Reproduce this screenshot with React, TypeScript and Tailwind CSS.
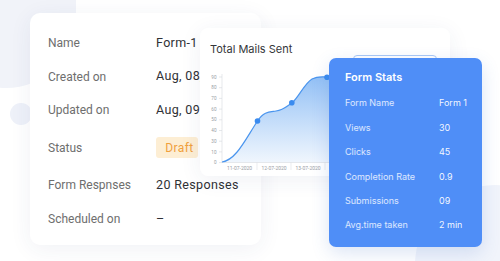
import React from 'react';

const details = [
  { label: 'Name', value: 'Form-1', h: 'h-[34px]' },
  { label: 'Created on', value: 'Aug, 08, 2020', h: 'h-[33px]' },
  { label: 'Updated on', value: 'Aug, 09, 2020', h: 'h-[34px]' },
  { label: 'Status', value: 'Draft', h: 'h-[41px]' },
  { label: 'Form Respnses', value: '20 Responses', h: 'h-[34px]' },
  { label: 'Scheduled on', value: '–', h: 'h-[34px]' },
];

const stats = [
  { label: 'Form Name', value: 'Form 1' },
  { label: 'Views', value: '30' },
  { label: 'Clicks', value: '45' },
  { label: 'Completion Rate', value: '0.9' },
  { label: 'Submissions', value: '09' },
  { label: 'Avg.time taken', value: '2 min' },
];

const yTicks = [90, 80, 70, 60, 50, 40, 30, 10, 0];

const MailsChart: React.FC = () => {
  const line =
    'M222,162 C236,160 245,140 257.5,121 C264,111 270,112 276,111 C284,110 287,106 292,103 C299,97 304,84 312,79 C318,76 322,77 327,77 L334,77';
  return (
    <svg className="absolute inset-0" width="250" height="148" viewBox="200 28 250 148">
      <defs>
        <linearGradient id="area" x1="0" y1="0" x2="0" y2="1">
          <stop offset="0%" stopColor="#8dbdf5" stopOpacity="0.95" />
          <stop offset="100%" stopColor="#eef5fd" stopOpacity="0.9" />
        </linearGradient>
      </defs>
      <path d={`${line} L334,162.5 L222,162.5 Z`} fill="url(#area)" />
      {/* axes */}
      <line x1="222" y1="74" x2="222" y2="163" stroke="#dcdfe4" strokeWidth="0.7" />
      <line x1="222" y1="162.5" x2="334" y2="162.5" stroke="#dcdfe4" strokeWidth="0.7" />
      {yTicks.map((t, i) => {
        const y = 77 + i * 10.7;
        return (
          <g key={t}>
            <line x1="219" y1={y} x2="222" y2={y} stroke="#d5d8dd" strokeWidth="0.6" />
            <text x="216.5" y={y + 1.6} fontSize="4.6" fill="#9a9ea5" textAnchor="end" fontFamily="Roboto, sans-serif">
              {t}
            </text>
          </g>
        );
      })}
      {[257, 291, 325].map((x) => (
        <line key={x} x1={x} y1="162.5" x2={x} y2="170" stroke="#dcdfe4" strokeWidth="0.6" />
      ))}
      {[
        { x: 239.5, t: '11-07-2020' },
        { x: 274, t: '12-07-2020' },
        { x: 308, t: '13-07-2020' },
      ].map((l) => (
        <text key={l.t} x={l.x} y="170" fontSize="5" fill="#9a9ea5" textAnchor="middle" fontFamily="Roboto, sans-serif">
          {l.t}
        </text>
      ))}
      <path d={line} fill="none" stroke="#4a95ee" strokeWidth="1.2" />
      {[
        [257.5, 121],
        [291.8, 102.8],
        [327, 77.3],
      ].map(([x, y]) => (
        <circle key={x} cx={x} cy={y} r="2.8" fill="#3a8bef" />
      ))}
    </svg>
  );
};

const App: React.FC = () => {
  return (
    <div className="relative w-[500px] h-[261px] overflow-hidden bg-white font-['Roboto',sans-serif]">
      {/* background blobs */}
      <div className="absolute -left-[64px] -top-[72px] w-[140px] h-[160px] rounded-full bg-[#f1f3f9]" />
      <div className="absolute left-[10px] top-[103px] w-[22px] h-[22px] rounded-full bg-[#eef1f9]" />
      <div className="absolute left-[415px] top-[185px] w-[160px] h-[160px] rounded-full bg-[#f1f4fb]" />

      {/* details card */}
      <div className="relative ml-[30px] mt-[13px] w-[231px] h-[232px] rounded-[10px] bg-white pt-[13px] pl-[18px] shadow-[0_4px_22px_rgba(40,60,110,0.07)]">
        {details.map((row) => (
          <div key={row.label} className={`grid grid-cols-[108px_1fr] items-center ${row.h}`}>
            <span className="text-[12px] text-[#6e6e6e] whitespace-nowrap">{row.label}</span>
            {row.label === 'Status' ? (
              <span className="inline-flex items-center justify-center w-[42px] h-[21px] rounded-[3px] bg-[#fdeed4] pl-[5px] text-[12px] tracking-[0.4px] text-[#f0a03c]">
                {row.value}
              </span>
            ) : (
              <span className="text-[12.5px] tracking-[0.35px] text-[#2f3135] whitespace-nowrap">{row.value}</span>
            )}
          </div>
        ))}
      </div>

      {/* chart card */}
      <div className="absolute left-[200px] top-[28px] w-[250px] h-[148px] rounded-[8px] bg-white shadow-[0_4px_22px_rgba(40,60,110,0.07)]">
        <MailsChart />
        <div className="relative pl-[10px] pt-[13px] text-[11px] leading-[16px] text-[#34363a] font-['Inter',sans-serif]">
          Total Mails Sent
        </div>
      </div>

      {/* outlined button peeking behind */}
      <div className="absolute left-[353px] top-[55px] w-[84px] h-[20px] rounded-[4px] border border-[#a9c8f5] bg-white" />

      {/* stats card */}
      <div className="absolute left-[329px] top-[58px] w-[153px] h-[189px] rounded-[7px] bg-[#4f8ef7] pl-[16px] pt-[12px] font-['Inter',sans-serif] text-white shadow-[0_6px_18px_rgba(60,110,200,0.18)]">
        <div className="h-[14px] text-[11px] leading-[14px] font-semibold">Form Stats</div>
        <div className="mt-[7px]">
          {stats.map((s) => (
            <div key={s.label} className="grid grid-cols-[94px_1fr] items-center h-[24.4px] text-[9px]">
              <span className="text-white/80 whitespace-nowrap">{s.label}</span>
              <span className="text-white/95">{s.value}</span>
            </div>
          ))}
        </div>
      </div>
    </div>
  );
};

export default App;
